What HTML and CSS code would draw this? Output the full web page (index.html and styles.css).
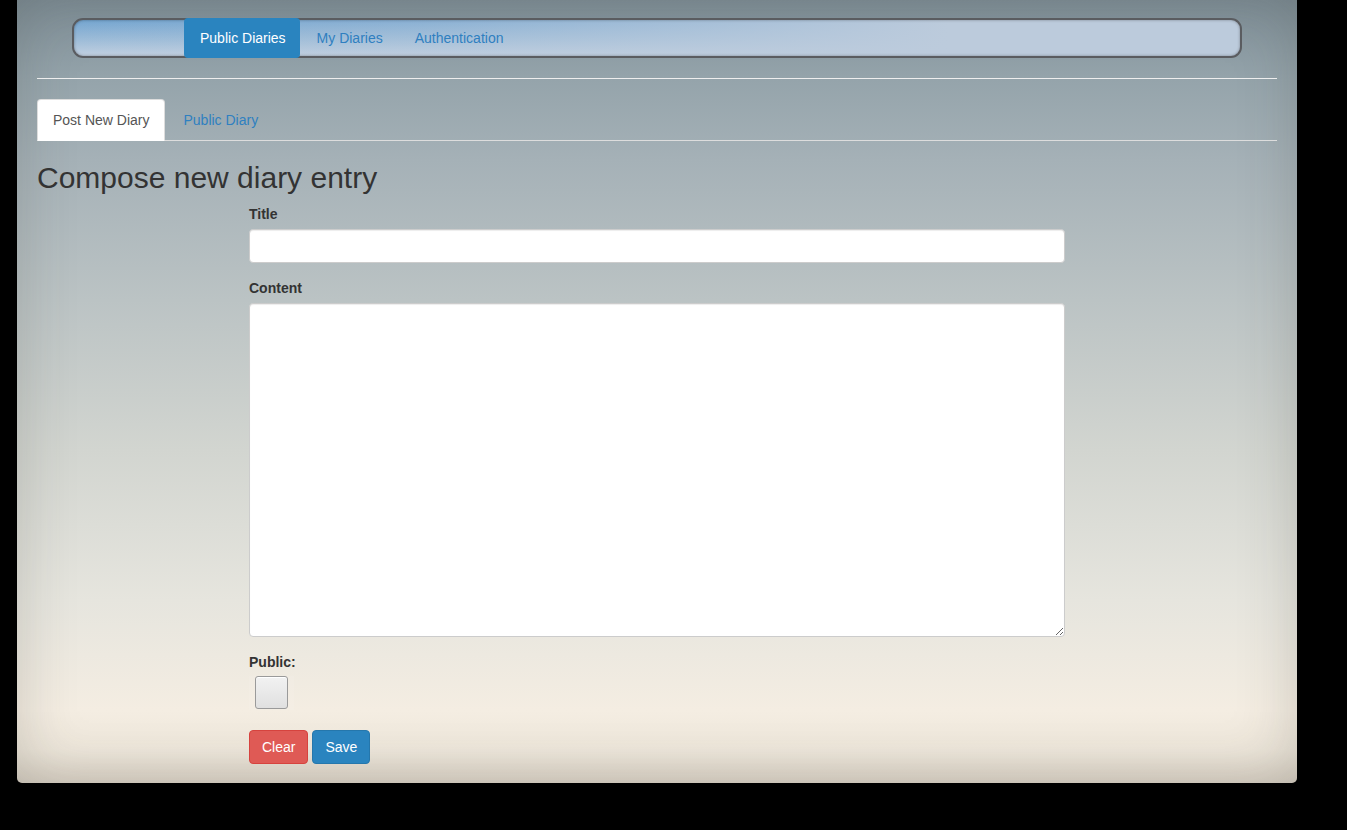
FILE: index.html
```html
<!DOCTYPE html>
<html>
<head>
<meta charset="utf-8">
<title>Diaries</title>
<link rel="stylesheet" href="styles.css">
</head>
<body>
<div class="page">
  <nav class="navbar">
    <ul class="nav">
      <li class="nav-item active">Public Diaries</li>
      <li class="nav-item">My Diaries</li>
      <li class="nav-item">Authentication</li>
    </ul>
  </nav>
  <hr class="rule">
  <ul class="tabs">
    <li class="tab active">Post New Diary</li>
    <li class="tab">Public Diary</li>
  </ul>
  <h2 class="heading">Compose new diary entry</h2>
  <form class="form">
    <div class="group">
      <label class="label">Title</label>
      <input class="input" type="text">
    </div>
    <div class="group">
      <label class="label">Content</label>
      <textarea class="textarea"></textarea>
    </div>
    <div class="group group-last">
      <label class="label">Public:</label>
      <div class="check-wrap"><span class="check"></span></div>
    </div>
    <div class="actions">
      <button type="button" class="btn btn-danger">Clear</button>
      <button type="button" class="btn btn-primary">Save</button>
    </div>
  </form>
</div>
</body>
</html>
```

FILE: styles.css
```css
* { box-sizing: border-box; }
html, body { margin: 0; padding: 0; }
body {
  background: #000;
  font-family: "Liberation Sans", Arial, sans-serif;
  font-size: 14px;
  line-height: 20px;
  color: #333;
  width: 1347px;
  height: 830px;
  overflow: hidden;
}
.page {
  margin-left: 17px;
  width: 1280px;
  height: 783px;
  padding: 18px 20px 0 20px;
  border-radius: 0 0 5px 5px;
  background: linear-gradient(to bottom,
    #7f8f98 0px,
    #95a4ab 80px,
    #a5b1b7 160px,
    #bbc3c4 300px,
    #d2d5d0 450px,
    #e6e5de 600px,
    #f4ede2 710px,
    #eee7db 750px,
    #ddd5c9 783px);
  box-shadow: inset 0 0 60px rgba(60, 60, 50, 0.22);
}
.navbar {
  margin: 0 35px;
  height: 40px;
  border: 2px solid #5a5c60;
  border-radius: 11px;
  background:
    linear-gradient(to right, rgba(188,203,220,0) 0%, rgba(188,203,220,0.3) 30%, #bccbdc 75%),
    linear-gradient(to bottom, #74a5d0 0%, #9dbcd8 55%, #c2d0e0 100%);
  box-shadow: inset 0 0 3px rgba(0,0,0,0.35);
}
.nav {
  list-style: none;
  margin: -2px 0;
  padding: 0 0 0 110px;
  display: flex;
  height: 40px;
}
.nav-item {
  padding: 0 16px;
  height: 40px;
  line-height: 40px;
  color: #2f7fc0;
  border-radius: 4px;
  white-space: nowrap;
  flex: none;
}
.nav-item.active {
  background: #2a84bf;
  color: #fff;
  padding: 0 14px 0 16px;
  margin-right: 1px;
}
.rule {
  margin: 20px 0 20px 0;
  border: 0;
  border-top: 1px solid #eeeeee;
  height: 0;
}
.tabs {
  list-style: none;
  margin: 0;
  padding: 0;
  display: flex;
  border-bottom: 1px solid #dddddd;
  height: 42px;
}
.tab {
  padding: 10px 15px;
  margin-right: 2px;
  line-height: 20px;
  color: #2f80c0;
  border: 1px solid transparent;
  border-radius: 4px 4px 0 0;
  height: 42px;
}
.tab.active {
  background: #fff;
  color: #555;
  border-color: #dddddd #dddddd transparent;
}
.heading {
  margin: 20px 0 10px 0;
  font-size: 30px;
  font-weight: normal;
  line-height: 33px;
  color: #333;
}
.form {
  margin-left: 212px;
  width: 816px;
}
.group { margin-bottom: 15px; }
.group-last { margin-bottom: 20px; }
.label {
  display: block;
  font-weight: bold;
  margin-bottom: 5px;
  line-height: 20px;
}
.input {
  display: block;
  width: 100%;
  height: 34px;
  border: 1px solid #cccccc;
  border-radius: 4px;
  background: #fff;
  box-shadow: inset 0 1px 1px rgba(0,0,0,0.075);
  font-family: inherit;
  font-size: 14px;
}
.textarea {
  display: block;
  width: 100%;
  height: 334px;
  border: 1px solid #cccccc;
  border-radius: 4px;
  background: #fff;
  box-shadow: inset 0 1px 1px rgba(0,0,0,0.075);
  font-family: inherit;
  font-size: 14px;
  resize: vertical;
  margin: 0;
}
.check-wrap {
  width: 45px;
  height: 34px;
  margin-top: -1px;
  padding: 0 6px;
  background: rgba(255,255,255,0.08);
}
.check {
  display: block;
  width: 33px;
  height: 33px;
  border: 1px solid #9a9a9a;
  border-radius: 3px;
  background: linear-gradient(to bottom, #f2f2f2, #e0e0e0);
  box-shadow: inset 0 1px 0 #fff;
}
.actions {
  display: flex;
  gap: 4px;
}
.btn {
  height: 34px;
  padding: 6px 12px;
  font-family: inherit;
  font-size: 14px;
  line-height: 20px;
  color: #fff;
  border-radius: 4px;
  border: 1px solid transparent;
  cursor: pointer;
}
.btn-danger {
  background: #df5a55;
  border-color: #d6433e;
}
.btn-primary {
  background: #2a84bf;
  border-color: #2577ac;
}
```
